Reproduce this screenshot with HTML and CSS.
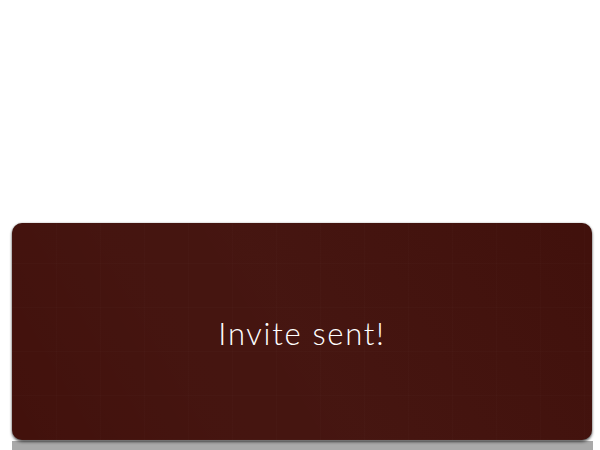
FILE: index.html
```html
<!DOCTYPE html>
<html>
<head>
<meta charset="utf-8">
<link rel="stylesheet" href="styles.css">
</head>
<body>
<div class="stage">
  <div class="toast">
    <p class="toast-text">Invite sent!</p>
  </div>
  <div class="under"></div>
</div>
</body>
</html>
```
FILE: styles.css
```css
html, body {
  margin: 0;
  padding: 0;
  background: #ffffff;
}
.stage {
  height: 450px;
  overflow: hidden;
  display: flex;
  flex-direction: column;
  justify-content: flex-end;
  padding: 0 8px 0 12px;
  box-sizing: border-box;
}
.toast {
  height: 217px;
  flex: none;
  border-radius: 10px;
  background-color: #42110c;
  background-image:
    linear-gradient(60deg, rgba(255,255,255,0) 0%, rgba(255,255,255,0.015) 30%, rgba(255,255,255,0.02) 50%, rgba(0,0,0,0.02) 100%),
    repeating-linear-gradient(90deg, rgba(255,255,255,0.012) 0 1px, transparent 1px 44px),
    repeating-linear-gradient(0deg, rgba(255,255,255,0.012) 0 1px, transparent 1px 44px);
  box-shadow: 0 2px 3px rgba(0,0,0,0.6), 0 0 2px rgba(0,0,0,0.3);
  display: flex;
  align-items: center;
  justify-content: center;
  position: relative;
  z-index: 1;
}
.toast-text {
  margin: 0;
  color: #ffffff;
  font-family: "Lato", "Noto Sans", sans-serif;
  font-weight: 300;
  font-size: 31px;
  letter-spacing: 1.7px;
  padding-top: 2px;
}
.under {
  flex: none;
  height: 10px;
  margin-top: 1px;
  margin-bottom: -1px;
  margin-right: -1px;
  background: #a9a9a9;
}
```
